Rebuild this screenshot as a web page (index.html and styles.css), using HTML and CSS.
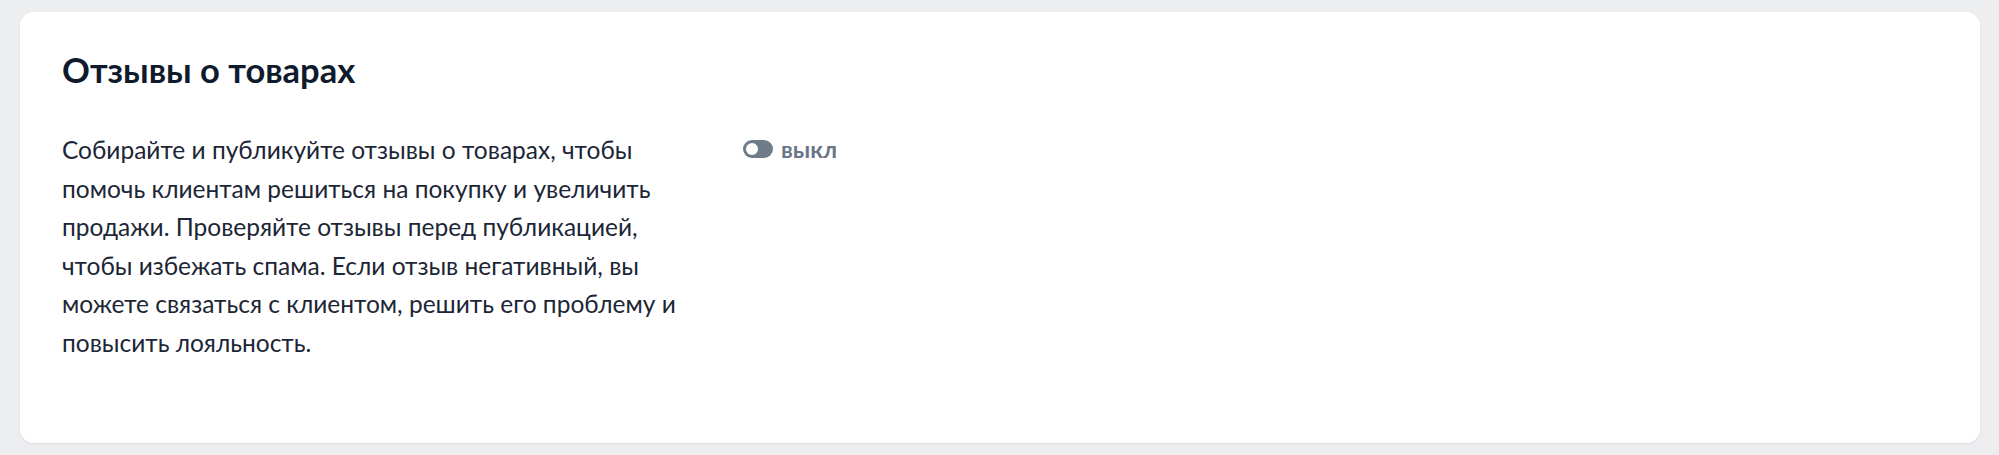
FILE: index.html
```html
<!DOCTYPE html>
<html lang="ru">
<head>
<meta charset="utf-8">
<link rel="stylesheet" href="styles.css">
</head>
<body>
<section class="card">
  <h2 class="title">Отзывы о товарах</h2>
  <div class="row">
    <p class="desc">Собирайте и публикуйте отзывы о товарах, чтобы помочь клиентам решиться на покупку и увеличить продажи. Проверяйте отзывы перед публикацией, чтобы избежать спама. Если отзыв негативный, вы можете связаться с клиентом, решить его проблему и повысить лояльность.</p>
    <div class="toggle">
      <span class="switch"><span class="knob"></span></span>
      <span class="state">выкл</span>
    </div>
  </div>
</section>
</body>
</html>
```
FILE: styles.css
```css
html, body {
  margin: 0;
  padding: 0;
}
body {
  background: #edeef0;
  padding: 12px 19px 12px 20px;
  font-family: Lato, "Noto Sans", sans-serif;
  color: #1c2636;
}
.card {
  background: #ffffff;
  border-radius: 14px;
  box-shadow: 0 1px 2px rgba(20, 30, 50, 0.08);
  padding: 37px 42px 0 42px;
  height: 394px;
}
.title {
  margin: 0;
  font-size: 34.5px;
  line-height: 42px;
  font-weight: 700;
  color: #0f1b2d;
}
.row {
  display: flex;
  align-items: flex-start;
  margin-top: 40px;
}
.desc {
  margin: 0;
  width: 620px;
  margin-right: 61px;
  font-size: 24.5px;
  line-height: 38.6px;
  color: #1c2636;
}
.toggle {
  display: flex;
  align-items: center;
  gap: 8px;
  height: 36px;
}
.switch {
  display: flex;
  align-items: center;
  width: 30px;
  height: 18px;
  border-radius: 9px;
  background: #6f7b89;
  padding: 0 3px;
  box-sizing: border-box;
}
.knob {
  width: 12px;
  height: 12px;
  border-radius: 50%;
  background: #ffffff;
}
.state {
  font-size: 23.5px;
  font-weight: 700;
  color: #6a7685;
}
```
